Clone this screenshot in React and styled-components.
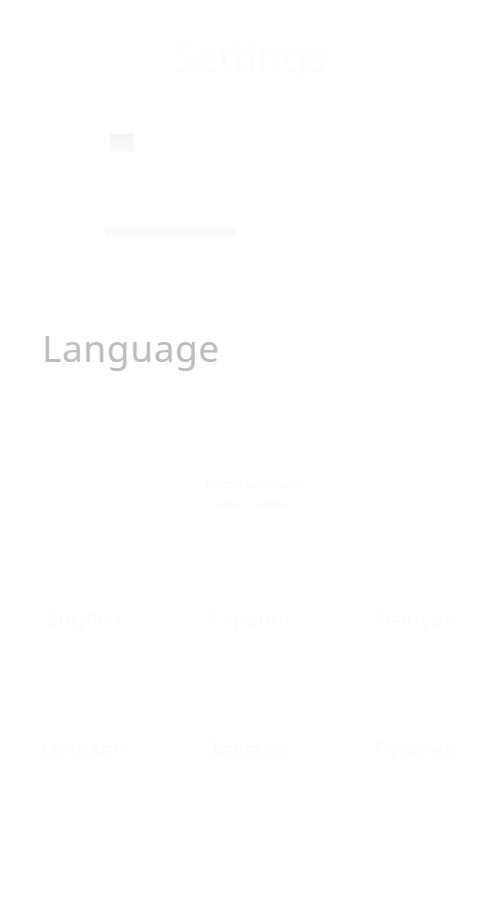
import styled, { createGlobalStyle } from 'styled-components';

const Global = createGlobalStyle`
  html, body { margin: 0; padding: 0; background: #ffffff; }
  body { font-family: "Noto Sans", "Liberation Sans", sans-serif; }
`;

const Page = styled.div`
  width: 500px;
  height: 900px;
  overflow: hidden;
  background: #ffffff;
  display: flex;
  flex-direction: column;
`;

const Title = styled.h1`
  margin: 30px 0 0;
  text-align: center;
  font-size: 40px;
  font-weight: 400;
  line-height: 54px;
  color: #fdfdfd;
`;

const Hero = styled.div`
  margin: 50px 0 0 105px;
  width: 131px;
  height: 103px;
  display: flex;
  flex-direction: column;
  justify-content: space-between;
`;

const Square = styled.div`
  margin-left: 5px;
  width: 24px;
  height: 18px;
  background: linear-gradient(#f2f2f2, #fbfbfb);
`;

const Bar = styled.div`
  width: 131px;
  height: 8px;
  background: linear-gradient(#f6f6f6, #fdfdfd);
`;

const Heading = styled.h2`
  margin: 86px 0 0 42px;
  font-size: 37px;
  font-weight: 400;
  line-height: 50px;
  letter-spacing: 0.6px;
  color: #bdbdbd;
`;

const Subtitle = styled.p`
  margin: 100px 0 0;
  text-align: center;
  font-size: 13px;
  line-height: 20px;
  color: #fdfdfd;
`;

const Grid = styled.div`
  margin-top: 90px;
  display: grid;
  grid-template-columns: repeat(3, 1fr);
  row-gap: 100px;
`;

const Option = styled.div`
  text-align: center;
  font-size: 22px;
  line-height: 30px;
  color: #fdfdfd;
`;

const languages = ['English', 'Español', 'Français', 'Deutsch', 'Italiano', 'Русский'];

export default function App() {
  return (
    <>
      <Global />
      <Page>
        <Title>Settings</Title>
        <Hero>
          <Square />
          <Bar />
        </Hero>
        <Heading>Language</Heading>
        <Subtitle>
          Choose language
          <br />
          Select below
        </Subtitle>
        <Grid>
          {languages.map(l => (
            <Option key={l}>{l}</Option>
          ))}
        </Grid>
      </Page>
    </>
  );
}
